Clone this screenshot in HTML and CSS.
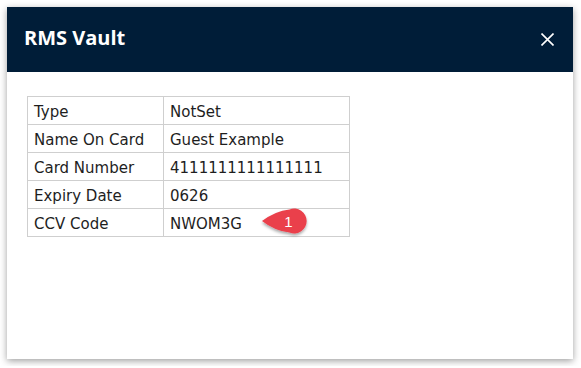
FILE: index.html
```html
<!DOCTYPE html>
<html lang="en">
<head>
    <meta charset="UTF-8">
    <meta name="viewport" content="width=device-width, initial-scale=1.0">
    <title>RMS Vault</title>
    <link rel="stylesheet" href="styles.css">
</head>
<body>
    <div class="vault-dialog">
        <div class="dialog-header">
            <h1>RMS Vault</h1>
            <button class="close-btn" aria-label="Close">
                <svg width="13" height="13" viewBox="0 0 13 13">
                    <path d="M0.5 0.5 L12.5 12.5 M12.5 0.5 L0.5 12.5" stroke="#fff" stroke-width="1.6" fill="none"/>
                </svg>
            </button>
        </div>

        <div class="dialog-body">
            <div class="card-wrap">
                <table class="card-table">
                    <tr><td>Type</td><td>NotSet</td></tr>
                    <tr><td>Name On Card</td><td>Guest Example</td></tr>
                    <tr><td>Card Number</td><td>4111111111111111</td></tr>
                    <tr><td>Expiry Date</td><td>0626</td></tr>
                    <tr><td>CCV Code</td><td>NWOM3G</td></tr>
                </table>

                <!-- annotation marker -->
                <svg class="marker" width="60" height="40" viewBox="0 0 60 40">
                    <defs>
                        <filter id="shade" x="-30%" y="-30%" width="160%" height="170%">
                            <feDropShadow dx="0" dy="2" stdDeviation="1.6" flood-color="#000" flood-opacity="0.35"/>
                        </filter>
                    </defs>
                    <path d="M6 18 Q19 8 33.5 6.4 A12.5 12.5 0 1 1 33.5 29.6 Q19 28 6 18 Z" fill="#ea3f4b" filter="url(#shade)"/>
                    <text x="32.5" y="23.5" fill="#fff" font-family="Liberation Sans, Arial, sans-serif" font-size="15" text-anchor="middle">1</text>
                </svg>
            </div>
        </div>
    </div>
</body>
</html>
```

FILE: styles.css
```css
* {
    box-sizing: border-box;
    margin: 0;
    padding: 0;
}

body {
    background-color: #fff;
    padding: 7px;
    font-family: "DejaVu Sans", Verdana, sans-serif;
    color: #1e1e1e;
}

.vault-dialog {
    width: 566px;
    height: 352px;
    background-color: #fff;
    box-shadow: 0 2px 7px rgba(0, 0, 0, 0.38);
}

.dialog-header {
    height: 65px;
    background-color: #001d38;
    display: flex;
    align-items: center;
    justify-content: space-between;
    padding: 0 19px 3px 17px;
}

.dialog-header h1 {
    font-family: "Open Sans", sans-serif;
    font-weight: 700;
    font-size: 20px;
    line-height: 1;
    color: #fff;
}

.close-btn {
    background: none;
    border: none;
    width: 13px;
    height: 13px;
    display: flex;
    margin-top: 3px;
    cursor: pointer;
}

.dialog-body {
    padding: 24px 20px;
}

.card-wrap {
    position: relative;
    width: 323px;
}

.card-table {
    border-collapse: collapse;
    width: 323px;
    font-size: 15px;
}

.card-table td {
    border: 1px solid #cfcfcf;
    height: 28px;
    padding: 4px 6px 0;
    line-height: 1;
    white-space: nowrap;
}

.card-table td:first-child {
    width: 136px;
}

.marker {
    position: absolute;
    left: 229px;
    top: 107px;
}
```
